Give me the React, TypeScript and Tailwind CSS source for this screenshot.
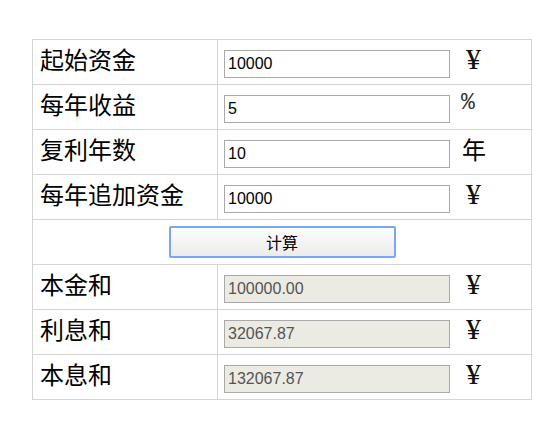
import { useState } from "react";

const cjk = "font-['SimSun','Noto_Sans_CJK_SC',serif]";

export default function App() {
  const [principal, setPrincipal] = useState("10000");
  const [rate, setRate] = useState("5");
  const [years, setYears] = useState("10");
  const [yearly, setYearly] = useState("10000");

  const inputRows = [
    { label: "起始资金", value: principal, set: setPrincipal, unit: "yen" },
    { label: "每年收益", value: rate, set: setRate, unit: "%" },
    { label: "复利年数", value: years, set: setYears, unit: "年" },
    { label: "每年追加资金", value: yearly, set: setYearly, unit: "yen" },
  ];

  const outputRows = [
    { label: "本金和", value: "100000.00" },
    { label: "利息和", value: "32067.87" },
    { label: "本息和", value: "132067.87" },
  ];

  const unitEl = (unit: string) => {
    if (unit === "yen")
      return (
        <span className="-mt-[5px] ml-[16px] inline-block font-['Liberation_Serif',serif] text-[30px] leading-[28px] text-[#111]">
          ¥
        </span>
      );
    if (unit === "%")
      return (
        <span className="-mt-[6px] ml-[11px] inline-block font-['Liberation_Mono',monospace] text-[23px] leading-[28px] text-[#333]">
          %
        </span>
      );
    return (
      <span className={`-mt-[5px] ml-[12px] inline-block ${cjk} text-[24px] leading-[28px] text-black`}>
        {unit}
      </span>
    );
  };

  return (
    <div className="min-h-[440px] bg-white pl-[32px] pt-[39px]">
      <table className="w-[500px] border-collapse border border-[#d4d4d4]">
        <tbody>
          {inputRows.map((r) => (
            <tr key={r.label}>
              <td className={`h-[45px] w-[185px] border border-[#d4d4d4] pb-[6px] pl-[7px] align-middle ${cjk} text-[24px] text-black`}>
                {r.label}
              </td>
              <td className="h-[45px] border border-[#d4d4d4] pl-[6px] pt-[4px] align-middle">
                <div className="flex items-start">
                  <input
                    value={r.value}
                    onChange={(e) => r.set(e.target.value)}
                    className="h-[28px] w-[226px] border border-[#a9a9a9] bg-white px-[3px] font-['Liberation_Sans',Arial,sans-serif] text-[16px] text-black outline-none"
                  />
                  {unitEl(r.unit)}
                </div>
              </td>
            </tr>
          ))}
          <tr>
            <td colSpan={2} className="h-[45px] border border-[#d4d4d4] text-center align-middle">
              <button className="h-[32px] w-[227px] rounded-[2px] border-2 border-[#7ba6f0] bg-gradient-to-b from-[#fdfdfd] to-[#ececec] font-['Noto_Sans_CJK_SC',sans-serif] text-[16px] text-black">
                计算
              </button>
            </td>
          </tr>
          {outputRows.map((r) => (
            <tr key={r.label}>
              <td className={`h-[45px] w-[185px] border border-[#d4d4d4] pb-[6px] pl-[7px] align-middle ${cjk} text-[24px] text-black`}>
                {r.label}
              </td>
              <td className="h-[45px] border border-[#d4d4d4] pl-[6px] pt-[4px] align-middle">
                <div className="flex items-start">
                  <input
                    value={r.value}
                    readOnly
                    className="h-[28px] w-[226px] border border-[#a9a9a9] bg-[#ebebe4] px-[3px] font-['Liberation_Sans',Arial,sans-serif] text-[16px] text-[#545454] outline-none"
                  />
                  {unitEl("yen")}
                </div>
              </td>
            </tr>
          ))}
        </tbody>
      </table>
    </div>
  );
}
